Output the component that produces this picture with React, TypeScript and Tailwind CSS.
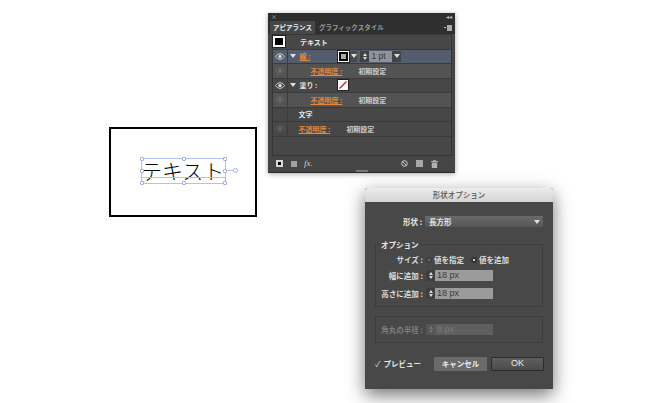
const jp = { fontFamily: '"Noto Sans CJK JP", "Liberation Sans", sans-serif' };

function Eye({ dim }: { dim?: boolean }) {
  return (
    <svg width="10" height="7" viewBox="0 0 11 8" className={dim ? "opacity-20" : ""}>
      <path d="M0.5 4C2 1.500 4 .8 5.500 .8S9 1.500 10.500 4C9 6.500 7 7.200 5.500 7.200S2 6.500 .5 4Z" fill="none" stroke="#d8d8d8" strokeWidth="1" />
      <circle cx="5.500" cy="4" r="2" fill="#d8d8d8" />
    </svg>
  );
}

function Tri() {
  return <div className="h-0 w-0 border-x-[3px] border-t-[4px] border-x-transparent border-t-[#e0e0e0]" />;
}

function Row({ eye, dimEye, active, lighter, indent, children }: { eye?: boolean; dimEye?: boolean; active?: boolean; lighter?: boolean; indent?: number; children?: React.ReactNode }) {
  const bg = active ? "bg-[#535d6e]" : lighter ? "bg-[#535353]" : "bg-[#474747]";
  return (
    <div className={`flex h-[14.500px] items-center border-b border-[#3a3a3a] ${bg}`}>
      <div className="flex h-full w-[15px] shrink-0 items-center justify-center border-r border-[#3c3c3c]">
        {eye && <Eye />}
        {dimEye && <Eye dim />}
      </div>
      <div className="flex min-w-0 flex-1 items-center" style={{ paddingLeft: indent ?? 0 }}>
        {children}
      </div>
    </div>
  );
}

function OpacityRow({ lighter, indent, gap }: { lighter?: boolean; indent: number; gap: number }) {
  return (
    <Row dimEye lighter={lighter} indent={indent}>
      <span className="text-[7px] font-bold whitespace-nowrap text-[#e5883a] underline">不透明度 :</span>
      <span className="text-[7px] font-bold whitespace-nowrap text-[#cfcfcf]" style={{ marginLeft: gap }}>初期設定</span>
    </Row>
  );
}

function Panel() {
  return (
    <div style={jp} className="absolute top-[13px] left-[268px] flex h-[160px] w-[187px] flex-col bg-[#454545] shadow-[0_1px_5px_rgba(0,0,0,0.35)]">
      <div className="flex h-[8px] items-center justify-between bg-[#2e2e2e] px-[3px] text-[6px] leading-none text-[#bdbdbd]">
        <span>×</span>
        <span>◂◂</span>
      </div>
      <div className="flex h-[13px] items-stretch bg-[#2f2f2f] pr-[3px]">
        <div className="ml-[2px] flex w-[45px] items-center justify-center bg-[#474747] text-[6.500px] font-bold whitespace-nowrap text-[#ececec]">アピアランス</div>
        <div className="ml-[4px] flex items-center text-[6.500px] font-bold whitespace-nowrap text-[#9c9c9c]">グラフィックスタイル</div>
        <div className="ml-auto flex items-center gap-[1px]">
          <div className="h-[1px] w-[2px] bg-[#bbb]" />
          <div className="h-[6px] w-[5px] bg-[#aaa]" />
        </div>
      </div>
      <div className="mx-[3.500px] flex h-[122px] flex-col border border-[#353535] bg-[#474747]">
        <div className="flex h-[14.500px] items-center border-b border-[#3a3a3a]">
          <div className="ml-[0.500px] h-[11px] w-[12px] border-2 border-white bg-black outline outline-[#222]" />
          <span className="ml-[15px] text-[7px] font-bold text-[#ececec]">テキスト</span>
        </div>
        <Row eye active>
          <div className="ml-[2px]"><Tri /></div>
          <span className="ml-[4px] text-[7px] font-bold whitespace-nowrap text-[#e5883a] underline">線 :</span>
          <div className="ml-[28px] flex h-[11px] w-[11px] items-center justify-center border border-white bg-black outline outline-[#222]">
            <div className="h-[5px] w-[5px] bg-[#aaa]" />
          </div>
          <div className="ml-[1px] flex h-[11px] w-[7px] items-center justify-center bg-[#4a4a4a]"><Tri /></div>
          <div className="ml-[3px] flex h-[11px] w-[9px] flex-col items-center justify-center gap-[1px] bg-[#404040]">
            <div className="h-0 w-0 border-x-[2px] border-b-[3px] border-x-transparent border-b-[#ddd]" />
            <div className="h-0 w-0 border-x-[2px] border-t-[3px] border-x-transparent border-t-[#ddd]" />
          </div>
          <div className="flex h-[11px] w-[23px] items-center bg-[#8d929b] pl-[2px] text-[8.500px] text-[#3a3a3a]" style={{ fontFamily: '"Liberation Sans", sans-serif' }}>1 pt</div>
          <div className="flex h-[11px] w-[9px] items-center justify-center bg-[#444]"><Tri /></div>
        </Row>
        <OpacityRow lighter indent={23} gap={16} />
        <Row eye>
          <div className="ml-[2px]"><Tri /></div>
          <span className="ml-[4px] text-[7px] font-bold whitespace-nowrap text-[#e2e2e2]">塗り :</span>
          <svg className="ml-[20px]" width="12" height="12" viewBox="0 0 12 12">
            <rect x=".5" y=".5" width="11" height="11" fill="#fff" stroke="#222" />
            <path d="M2.500 9.500 9.500 2.500" stroke="#e0202a" strokeWidth="1.500" />
          </svg>
        </Row>
        <OpacityRow lighter indent={23} gap={16} />
        <Row>
          <span className="ml-[11px] text-[7px] font-bold text-[#e2e2e2]">文字</span>
        </Row>
        <OpacityRow indent={11} gap={16} />
      </div>
      <div className="mx-[8px] mt-[3px] flex items-center">
        <div className="h-[7px] w-[7px] border-2 border-[#d8d8d8] bg-black" />
        <div className="ml-[8px] h-[6px] w-[6px] bg-[#a0a0a0]" />
        <span className="ml-[7px] text-[9px] leading-none text-[#cfcfcf] italic" style={{ fontFamily: '"Liberation Serif", serif' }}>fx.</span>
        <svg className="ml-auto" width="7" height="7" viewBox="0 0 7 7">
          <circle cx="3.500" cy="3.500" r="2.800" fill="none" stroke="#d0d0d0" />
          <path d="M1.500 1.500 5.500 5.500" stroke="#d0d0d0" />
        </svg>
        <div className="ml-[8px] h-[7px] w-[7px] bg-[#a8a8a8]" />
        <svg className="mr-[9px] ml-[8px]" width="7" height="8" viewBox="0 0 7 8">
          <path d="M0 1.500H7M2.500 1.500V.5H4.500V1.500" stroke="#b0b0b0" fill="none" />
          <path d="M.8 2.500H6.200V8H.8Z" fill="#b0b0b0" />
        </svg>
      </div>
      <div className="mx-auto mt-auto h-[1.500px] w-[12px] bg-[#777]" />
      <div className="h-[1.500px] bg-[#2b2b2b]" />
    </div>
  );
}

function Handle({ cls }: { cls: string }) {
  return <div className={`absolute h-[4px] w-[4px] rounded-[1px] border border-[#a3aef5] bg-white ${cls}`} />;
}

function Canvas() {
  return (
    <div className="absolute top-[127px] left-[109px] h-[90px] w-[148px] border-2 border-black bg-white" style={jp}>
      <div className="absolute top-[29px] left-[30px] h-[26px] w-[85px] border border-[#b4bdf7]">
        <span className="absolute -top-[3px] -left-[1px] text-[21px] leading-[29px] font-light whitespace-nowrap text-black">テキスト</span>
        <div className="absolute top-[18px] right-0 left-0 h-px bg-[#b4bdf7]" />
        <Handle cls="-top-[2px] -left-[2px]" />
        <Handle cls="-top-[2px] left-[40px]" />
        <Handle cls="-top-[2px] -right-[2px]" />
        <Handle cls="top-[10px] -left-[2px]" />
        <Handle cls="top-[10px] -right-[2px]" />
        <Handle cls="-bottom-[2px] -left-[2px]" />
        <Handle cls="-bottom-[2px] left-[40px]" />
        <Handle cls="-bottom-[2px] -right-[2px]" />
        <div className="absolute top-[11px] -right-[8px] h-px w-[7px] bg-[#b4bdf7]" />
        <div className="absolute top-[9px] -right-[13px] h-[5px] w-[5px] rounded-full border border-[#a3aef5] bg-white" />
      </div>
    </div>
  );
}

function Spinner({ dim }: { dim?: boolean }) {
  const c = dim ? "#777" : "#ddd";
  return (
    <div className={`flex h-[11px] w-[9px] flex-col items-center justify-center gap-[1px] ${dim ? "bg-[#565656]" : "bg-[#3f3f3f]"}`}>
      <div className="h-0 w-0 border-x-[2.500px] border-b-[3px] border-x-transparent" style={{ borderBottomColor: c }} />
      <div className="h-0 w-0 border-x-[2.500px] border-t-[3px] border-x-transparent" style={{ borderTopColor: c }} />
    </div>
  );
}

function Field({ label, value, dim, className }: { label: string; value: string; dim?: boolean; className?: string }) {
  return (
    <div className={`flex h-[11px] items-center ${className ?? ""}`}>
      <span className={`w-[47px] shrink-0 text-right text-[7.500px] font-bold whitespace-nowrap ${dim ? "text-[#7d7d7d]" : "text-[#dcdcdc]"}`}>{label}</span>
      <div className="ml-[3px] flex">
        <Spinner dim={dim} />
        <div className={`flex h-[11px] w-[58px] items-center pl-[2px] text-[9px] ${dim ? "bg-[#5f5f5f] text-[#7c7c7c]" : "bg-[#9b9b9b] text-[#3c3c3c]"}`} style={{ fontFamily: '"Liberation Sans", sans-serif' }}>{value}</div>
      </div>
    </div>
  );
}

function Dialog() {
  return (
    <div style={jp} className="absolute top-[188px] left-[365px] flex h-[201px] w-[188px] flex-col rounded-t-[3px] bg-[#484848] shadow-[0_6px_18px_rgba(0,0,0,0.55)]">
      <div className="flex h-[14px] items-center justify-center rounded-t-[3px] bg-gradient-to-b from-[#ececec] to-[#d4d4d4] text-[7.500px] font-medium text-[#555]">形状オプション</div>
      <div className="mt-[14px] flex h-[11px] items-center pl-[38px]">
        <span className="w-[20px] text-[7.500px] font-bold whitespace-nowrap text-[#e4e4e4]">形状 :</span>
        <div className="ml-[2px] flex h-[11px] w-[118px] items-center bg-gradient-to-b from-[#6a6a6a] to-[#565656] pr-[3px] pl-[4px] text-[7.500px] font-bold text-[#e4e4e4]">
          長方形
          <div className="ml-auto"><Tri /></div>
        </div>
      </div>
      <div className="relative mx-[10px] mt-[17px] flex h-[63px] flex-col border border-[#3d3d3d] pt-[9px]">
        <span className="absolute -top-[6px] left-[4px] bg-[#484848] px-[1px] text-[7.500px] leading-[11px] font-bold text-[#e8e8e8]">オプション</span>
        <div className="flex h-[11px] items-center">
          <span className="w-[47px] shrink-0 text-right text-[7.500px] font-bold text-[#dcdcdc]">サイズ :</span>
          <div className="ml-[3px] h-[6px] w-[6px] rounded-full border border-[#333] bg-[#5a5a5a]" />
          <span className="ml-[2px] text-[7.500px] font-bold whitespace-nowrap text-[#dcdcdc]">値を指定</span>
          <div className="ml-[7px] flex h-[6px] w-[6px] items-center justify-center rounded-full bg-[#333]"><div className="h-[2px] w-[2px] rounded-full bg-white" /></div>
          <span className="ml-[2px] text-[7.500px] font-bold whitespace-nowrap text-[#dcdcdc]">値を追加</span>
        </div>
        <Field className="mt-[5px]" label="幅に追加 :" value="18 px" />
        <Field className="mt-[7px]" label="高さに追加 :" value="18 px" />
      </div>
      <div className="mx-[10px] mt-[9px] flex h-[27px] items-center border border-[#3d3d3d]">
        <Field label="角丸の半径 :" value="9 px" dim />
      </div>
      <div className="mt-[14px] flex items-center pr-[9px] pl-[10px]">
        <span className="text-[8px] leading-none text-[#ddd]">✓</span>
        <span className="ml-[3px] text-[7.500px] font-bold whitespace-nowrap text-[#e4e4e4]">プレビュー</span>
        <div className="ml-auto flex h-[14px] w-[53px] items-center justify-center rounded-[1px] bg-[#6a6a6a] text-[7.500px] font-bold text-[#ececec]">キャンセル</div>
        <div className="ml-[4px] flex h-[14px] w-[53px] items-center justify-center rounded-[1px] border border-[#2c2c2c] bg-gradient-to-b from-[#5e5e5e] to-[#4c4c4c] text-[9px] text-[#ececec]" style={{ fontFamily: '"Liberation Sans", sans-serif' }}>OK</div>
      </div>
    </div>
  );
}

export default function App() {
  return (
    <div className="relative h-[403px] w-[660px] overflow-hidden bg-white">
      <Canvas />
      <Panel />
      <Dialog />
    </div>
  );
}
